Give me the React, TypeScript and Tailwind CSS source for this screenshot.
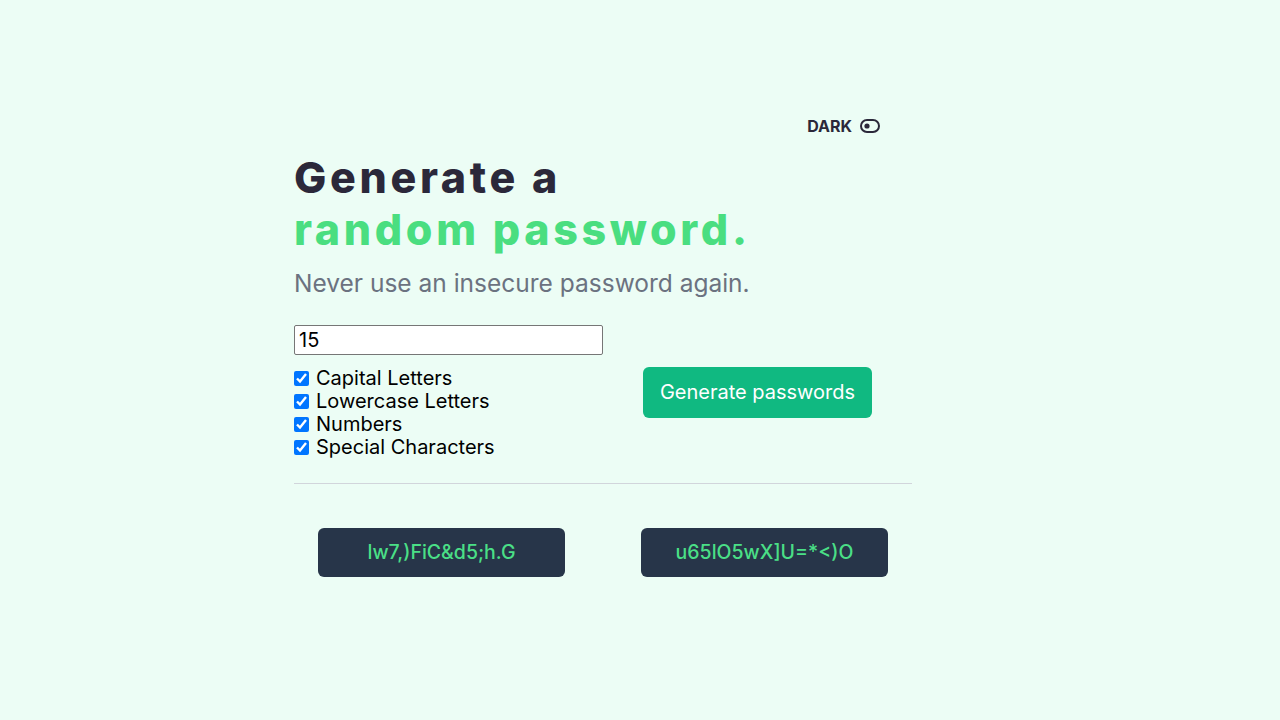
const options = ['Capital Letters', 'Lowercase Letters', 'Numbers', 'Special Characters'];
const passwords = ['lw7,)FiC&d5;h.G', 'u65lO5wX]U=*<)O'];

function ToggleIcon() {
  return (
    <svg width="20" height="14" viewBox="0 0 20 14" fill="none">
      <rect x="1" y="1" width="18" height="12" rx="6" stroke="currentColor" strokeWidth="2" />
      <circle cx="7" cy="7" r="2.6" fill="currentColor" />
    </svg>
  );
}

export default function App() {
  return (
    <div className="min-h-screen bg-[#ecfdf5] font-['Inter',sans-serif]">
      <div className="ml-[294px] w-[618px] pt-[114px]">
        <div className="flex items-center justify-end gap-[8px] pr-[32px] text-[16px] font-bold text-[#2b283a]">
          <span>DARK</span>
          <ToggleIcon />
        </div>

        <h1 className="mt-[13px] text-[43px] font-extrabold leading-[52px] tracking-[0.085em] text-[#2b283a]">
          Generate a
          <br />
          <span className="text-[#4ade80]">random password.</span>
        </h1>
        <p className="mt-[13px] text-[24.5px] leading-[30px] text-[#6b7280]">
          Never use an insecure password again.
        </p>

        <div className="mt-[27px] flex items-center gap-10">
          <div className="flex w-[309px] flex-col">
            <input
              type="number"
              defaultValue={15}
              className="h-[30px] w-[309px] rounded-[2px] border border-[#767676] bg-white px-[4px] text-[20px] text-black"
            />
            <div className="mt-[12px] flex flex-col">
              {options.map((o) => (
                <label key={o} className="flex items-center gap-[7px] text-[20px] leading-[23px] text-black">
                  <input type="checkbox" defaultChecked className="h-[15px] w-[15px] accent-[#0075ff]" />
                  {o}
                </label>
              ))}
            </div>
          </div>
          <button className="h-[51px] w-[229px] rounded-md bg-[#10b981] text-[20px] text-white">
            Generate passwords
          </button>
        </div>

        <hr className="mt-[24px] border-t border-[#d1d5db]" />

        <div className="mt-[44px] flex justify-between px-6">
          {passwords.map((p) => (
            <div
              key={p}
              className="flex h-[49px] w-[247px] items-center justify-center rounded-md bg-[#273549] text-[19.5px] font-medium text-[#4adf86]"
            >
              {p}
            </div>
          ))}
        </div>
      </div>
    </div>
  );
}
